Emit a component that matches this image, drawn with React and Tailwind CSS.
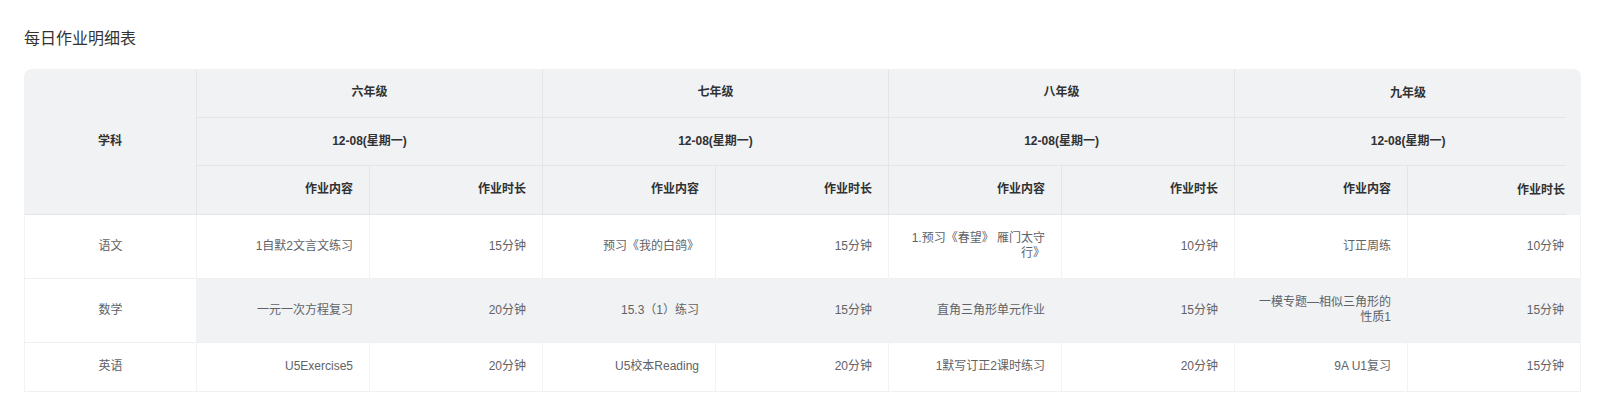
import React from "react";

const grades = ["六年级", "七年级", "八年级", "九年级"];

const rows = [
  {
    subject: "语文",
    cells: [
      ["1自默2文言文练习", "15分钟"],
      ["预习《我的白鸽》", "15分钟"],
      ["1.预习《春望》 雁门太守行》", "10分钟"],
      ["订正周练", "10分钟"],
    ],
  },
  {
    subject: "数学",
    striped: true,
    cells: [
      ["一元一次方程复习", "20分钟"],
      ["15.3（1）练习", "15分钟"],
      ["直角三角形单元作业", "15分钟"],
      ["一模专题—相似三角形的性质1", "15分钟"],
    ],
  },
  {
    subject: "英语",
    cells: [
      ["U5Exercise5", "20分钟"],
      ["U5校本Reading", "20分钟"],
      ["1默写订正2课时练习", "20分钟"],
      ["9A U1复习", "15分钟"],
    ],
  },
];

const th = "px-4 py-4 text-xs leading-[15.5px] font-bold text-[#303133] bg-[#f1f2f4]";
const thBorder = "border-r border-b border-[#e3e5e8]";
// last column: bottom line stops 15px short of the edge (scrollbar gutter)
const thLast =
  "bg-[linear-gradient(#e3e5e8,#e3e5e8)] bg-no-repeat bg-left-bottom bg-[length:calc(100%-15px)_1px]";

const td = "px-4 py-[16.5px] text-xs leading-[15px] text-[#606266] border-b border-[#eef0f2]";

export default function App() {
  return (
    <div className="bg-white min-h-[416px] px-6 pt-[27px] font-['Liberation_Sans','Noto_Sans_CJK_SC',sans-serif]">
      <h1 className="text-base leading-6 text-[#333] mb-[18px]">每日作业明细表</h1>

      <div className="rounded-t-lg overflow-hidden">
        <table className="w-full table-fixed border-separate border-spacing-0">
          <colgroup>
            {Array.from({ length: 9 }).map((_, i) => (
              <col key={i} className="w-[173px]" />
            ))}
          </colgroup>
          <thead>
            <tr>
              <th rowSpan={3} className={`${th} ${thBorder} text-center`}>
                学科
              </th>
              {grades.map((g, i) => (
                <th
                  key={g}
                  colSpan={2}
                  className={`${th} text-center ${i === 3 ? thLast : thBorder}`}
                >
                  {g}
                </th>
              ))}
            </tr>
            <tr>
              {grades.map((g, i) => (
                <th
                  key={g}
                  colSpan={2}
                  className={`${th} text-center ${i === 3 ? thLast : thBorder}`}
                >
                  12-08(星期一)
                </th>
              ))}
            </tr>
            <tr>
              {grades.map((g, i) => (
                <React.Fragment key={g}>
                  <th className={`${th} ${thBorder} text-right`}>作业内容</th>
                  <th className={`${th} text-right ${i === 3 ? thLast : thBorder}`}>
                    作业时长
                  </th>
                </React.Fragment>
              ))}
            </tr>
          </thead>
          <tbody>
            {rows.map((row) => (
              <tr key={row.subject}>
                <td className={`${td} bg-white text-center border-l border-r border-r-[#f2f3f5] border-l-[#f2f3f5]`}>
                  {row.subject}
                </td>
                {row.cells.map(([content, time], i) => (
                  <React.Fragment key={i}>
                    <td
                      className={`${td} text-right border-r border-r-[#f2f3f5] ${
                        row.striped ? "bg-[#f1f2f4]" : "bg-white"
                      }`}
                    >
                      {content}
                    </td>
                    <td
                      className={`${td} text-right border-r border-r-[#f2f3f5] ${
                        row.striped ? "bg-[#f1f2f4]" : "bg-white"
                      }`}
                    >
                      {time}
                    </td>
                  </React.Fragment>
                ))}
              </tr>
            ))}
          </tbody>
        </table>
      </div>
    </div>
  );
}
